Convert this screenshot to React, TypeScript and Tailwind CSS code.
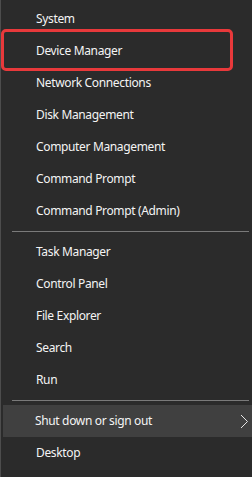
const groupA = [
  "System",
  "Device Manager",
  "Network Connections",
  "Disk Management",
  "Computer Management",
  "Command Prompt",
  "Command Prompt (Admin)",
];

const groupB = ["Task Manager", "Control Panel", "File Explorer", "Search", "Run"];

function Item({ label, marked }: { label: string; marked?: boolean }) {
  return (
    <div className="relative flex h-8 items-center pl-[35px] text-[12px] tracking-[-0.35px] text-[#f4f4f4]">
      {label}
      {marked && (
        <span className="pointer-events-none absolute -top-[6px] -bottom-[4px] left-0 w-[232px] rounded-[5px] border-[3px] border-[#e8393b]" />
      )}
    </div>
  );
}

function Divider() {
  return <div className="my-1 ml-[11px] mr-[3px] h-px bg-[#7a7a7a]" />;
}

export default function App() {
  return (
    <div
      className="h-[477px] w-[252px] overflow-hidden border-l border-[#4d4d4d] bg-[#2b2b2b] pt-[3px]"
      style={{ fontFamily: '"Noto Sans", "Open Sans", sans-serif' }}
    >
      {groupA.map((l) => (
        <Item key={l} label={l} marked={l === "Device Manager"} />
      ))}
      <Divider />
      {groupB.map((l) => (
        <Item key={l} label={l} />
      ))}
      <Divider />
      <div className="ml-[2px] flex h-8 items-center justify-between bg-[#404040] pl-[32px] pr-[3px] text-[12px] tracking-[-0.35px] text-[#f4f4f4]">
        <span>Shut down or sign out</span>
        <svg width="9" height="15" viewBox="0 0 9 15" fill="none">
          <path d="M1 1l6.5 6.5L1 14" stroke="#e6e6e6" strokeWidth="1" />
        </svg>
      </div>
      <Item label="Desktop" />
    </div>
  );
}
